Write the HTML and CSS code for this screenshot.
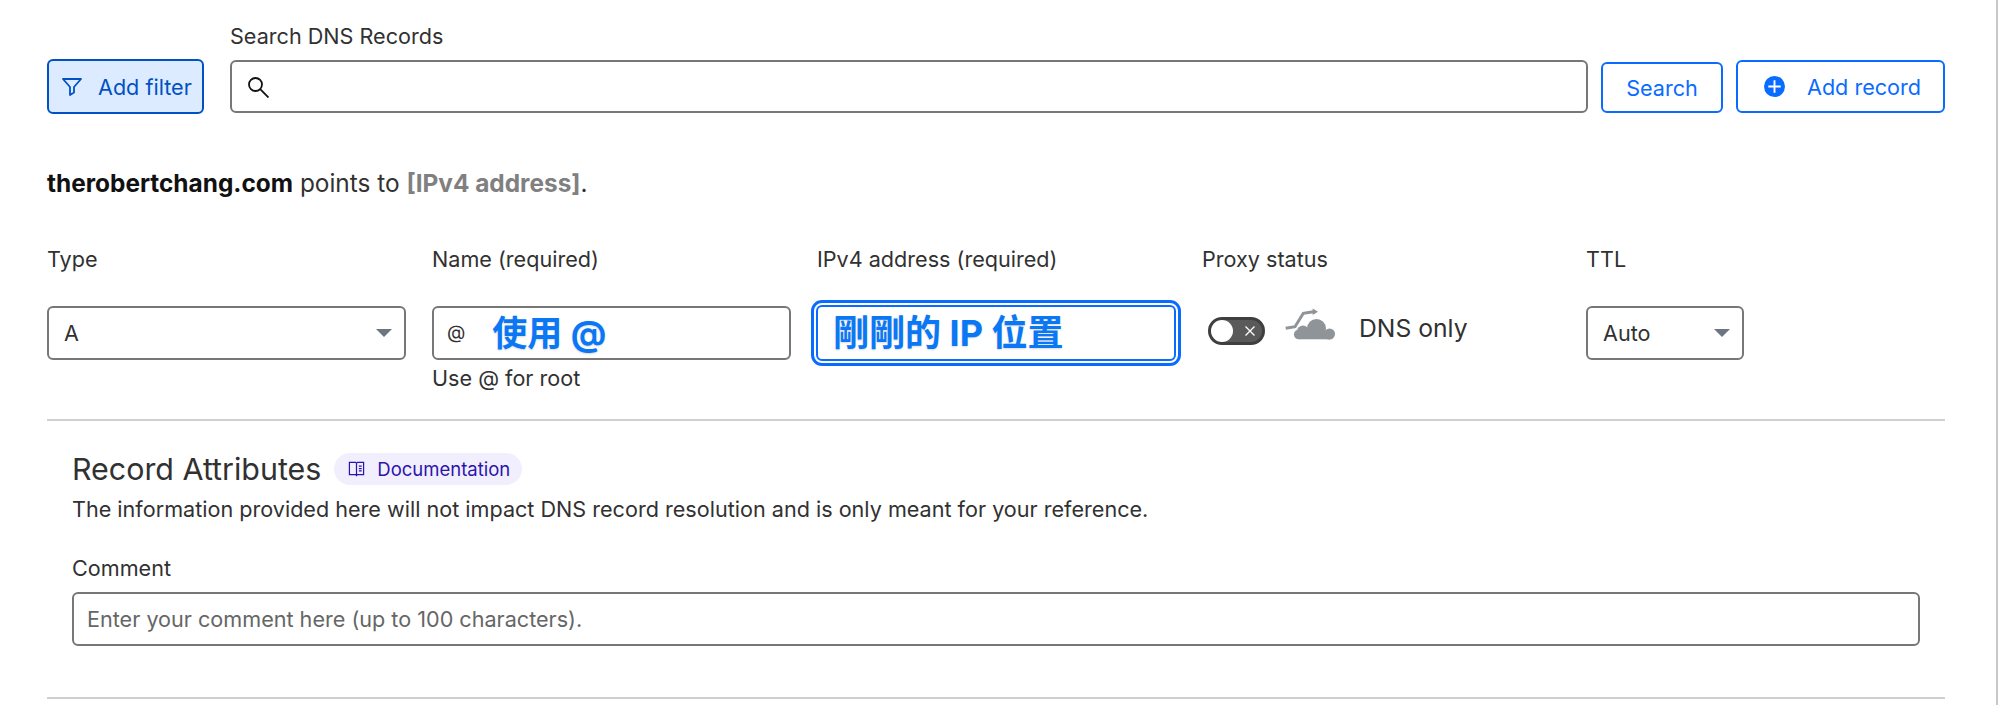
FILE: index.html
```html
<html>

<head>
    <title>DNS Records</title>
    <link rel="stylesheet" href="styles.css">
</head>

<body>
    <div class="page">
        <div class="searchRow">
            <button class="filterButton">
                <svg class="filterIcon" viewBox="0 0 20 18"><path d="M1 1H19L12 9V14.500L8 17V9Z" /></svg>
                Add filter
            </button>
            <div class="searchField">
                <div class="fieldLabel">Search DNS Records</div>
                <div class="textBox searchBox">
                    <svg class="searchIcon" viewBox="0 0 22 22"><circle cx="8.500" cy="8.500" r="6.500" /><path d="M13.200 13.200L21.500 21.500" /></svg>
                </div>
            </div>
            <button class="outlineButton searchButton">Search</button>
            <button class="outlineButton addButton">
                <svg class="plusIcon" viewBox="0 0 22 22"><circle cx="11" cy="11" r="11" /><path d="M11 4.500v13M4.500 11h13" /></svg>
                Add record
            </button>
        </div>

        <div class="pointsTo"><b>therobertchang.com</b> points to <span class="pointsAddress">[IPv4 address]</span>.</div>

        <div class="recordRow">
            <div class="column typeColumn">
                <div class="fieldLabel rowLabel">Type</div>
                <div class="textBox selectBox">A<span class="arrow"></span></div>
            </div>
            <div class="column nameColumn">
                <div class="fieldLabel rowLabel">Name (required)</div>
                <div class="textBox nameBox"><span class="atSign">@</span><span class="note noteName">使用 @</span></div>
                <div class="helpText">Use @ for root</div>
            </div>
            <div class="column ipColumn">
                <div class="fieldLabel rowLabel">IPv4 address (required)</div>
                <div class="textBox ipBox"><span class="note noteIp">剛剛的 IP 位置</span></div>
            </div>
            <div class="column proxyColumn">
                <div class="fieldLabel rowLabel">Proxy status</div>
                <div class="proxyLine">
                    <div class="toggle">
                        <span class="knob"></span>
                        <svg class="toggleX" viewBox="0 0 12 12"><path d="M1.500 1.500l9 9M10.500 1.500l-9 9" /></svg>
                    </div>
                    <svg class="cloudIcon" viewBox="0 0 50 32">
                        <circle class="cloudBody" cx="13.700" cy="26.500" r="4.800" />
                        <circle class="cloudBody" cx="18" cy="23.500" r="6" />
                        <circle class="cloudBody" cx="31.500" cy="20.500" r="9.500" />
                        <circle class="cloudBody" cx="44.500" cy="26" r="5.500" />
                        <rect class="cloudBody" x="14" y="24" width="31" height="7.300" />
                        <path class="cloudArrow" d="M0.700 20.300L10 18.700L18.300 5.300L28.300 3.700" />
                        <path class="cloudBody" d="M27.700 0.500L33 3.700L27.700 7z" />
                    </svg>
                    <span class="proxyText">DNS only</span>
                </div>
            </div>
            <div class="column ttlColumn">
                <div class="fieldLabel rowLabel">TTL</div>
                <div class="textBox selectBox">Auto<span class="arrow"></span></div>
            </div>
        </div>

        <hr class="rule" />

        <div class="attributes">
            <div class="attrHead">
                <span class="attrTitle">Record Attributes</span>
                <span class="docPill">
                    <svg class="bookIcon" viewBox="0 0 18 18"><path d="M1.500 2h6.500l1 1 1-1h6.500v13h-6.500l-1 1-1-1h-6.500zM9 3v12M11.500 6h3M11.500 8.500h3M11.500 11h3" /></svg>
                    Documentation
                </span>
            </div>
            <div class="attrInfo">The information provided here will not impact DNS record resolution and is only meant for your reference.</div>
            <div class="fieldLabel commentLabel">Comment</div>
            <div class="textBox commentBox">Enter your comment here (up to 100 characters).</div>
        </div>

        <hr class="rule ruleBottom" />
    </div>
</body>

</html>
```

FILE: styles.css
```css
html, body {
    margin: 0px;
    padding: 0px;
    background-color: white;
}

body {
    font-family: Inter, "Noto Sans CJK TC", sans-serif;
    font-size: 21.600px;
    color: #313131;
    height: 705px;
    overflow: hidden;
}

.page {
    box-sizing: border-box;
    width: 1998px;
    height: 705px;
    padding: 24px 51px 0px 47px;
    border-right: 2px solid #c8c8c8;
}

.searchRow {
    display: flex;
    align-items: flex-end;
    height: 90px;
}

button {
    font-family: inherit;
    font-size: 21.600px;
    box-sizing: border-box;
    background-color: white;
    border-radius: 6px;
    cursor: pointer;
    padding: 0px;
    flex-shrink: 0;
}

.filterButton {
    display: flex;
    align-items: center;
    width: 157px;
    height: 55px;
    margin-right: 26px;
    padding-left: 13px;
    color: #0051c3;
    background-color: #dcebff;
    border: 2px solid #0051c3;
}

.filterIcon {
    width: 20px;
    height: 18px;
    margin-right: 16px;
    fill: none;
    stroke: #0051c3;
    stroke-width: 1.800;
    stroke-linejoin: round;
}

.searchField {
    width: 1358px;
    margin-right: 13px;
    margin-bottom: 1px;
    flex-shrink: 0;
}

.fieldLabel {
    height: 37px;
    line-height: 27px;
}

.textBox {
    box-sizing: border-box;
    height: 54px;
    line-height: 50px;
    border: 2px solid #777777;
    border-radius: 6px;
    background-color: white;
}

.searchBox {
    height: 53px;
    display: flex;
    align-items: center;
    padding-left: 15px;
}

.searchIcon {
    width: 22px;
    height: 22px;
    fill: none;
    stroke: #111111;
    stroke-width: 1.800;
}

.outlineButton {
    display: flex;
    align-items: center;
    justify-content: center;
    color: #0a6cff;
    border: 2px solid #0a6cff;
    margin-bottom: 1px;
}

.searchButton {
    width: 122px;
    height: 51px;
    margin-right: 13px;
}

.addButton {
    width: 209px;
    height: 53px;
    justify-content: flex-start;
    padding-left: 26px;
}

.plusIcon {
    width: 21px;
    height: 21px;
    margin-right: 22px;
}

.plusIcon circle {
    fill: #0a6cff;
}

.plusIcon path {
    fill: none;
    stroke: white;
    stroke-width: 2;
}

.pointsTo {
    margin-top: 53px;
    font-size: 24.400px;
    line-height: 32px;
}

.pointsTo b {
    color: #111111;
}

.pointsAddress {
    font-weight: bold;
    color: #808080;
}

.recordRow {
    display: flex;
    margin-top: 47px;
    height: 173px;
}

.column {
    width: 385px;
    flex-shrink: 0;
}

.proxyColumn {
    width: 384px;
}

.rowLabel {
    height: 60px;
}

.selectBox {
    position: relative;
    padding-left: 15px;
}

.typeColumn .selectBox {
    width: 359px;
}

.ttlColumn .selectBox {
    width: 158px;
}

.arrow {
    position: absolute;
    right: 12px;
    top: 21px;
    border-left: 8px solid transparent;
    border-right: 8px solid transparent;
    border-top: 8px solid #6d7580;
}

.nameBox {
    width: 359px;
    display: flex;
    align-items: center;
    padding-left: 13px;
}

.atSign {
    font-size: 19px;
    margin-right: 27px;
}

.note {
    font-weight: bold;
    color: #0a78f5;
    line-height: 44px;
    text-shadow: 0px 1px 2px rgba(0, 0, 0, 0.15);
}

.noteName {
    font-size: 35px;
}

.noteIp {
    font-size: 36px;
}

.helpText {
    line-height: 36px;
}

.ipBox {
    width: 360px;
    height: 56px;
    margin-top: -1px;
    margin-left: -1px;
    display: flex;
    align-items: center;
    padding-left: 15px;
    border: 2px solid #0a6cff;
    outline: 3px solid #0a6cff;
    outline-offset: 2px;
}

.proxyLine {
    display: flex;
    align-items: center;
    height: 44px;
    padding-left: 6px;
}

.toggle {
    box-sizing: border-box;
    position: relative;
    width: 57px;
    height: 28px;
    margin-top: 6px;
    margin-right: 20px;
    border: 3px solid #3f3f3f;
    border-radius: 14px;
    background-color: #5a5a5a;
}

.knob {
    position: absolute;
    left: 0px;
    top: 0px;
    width: 22px;
    height: 22px;
    border-radius: 50%;
    background-color: white;
}

.toggleX {
    position: absolute;
    right: 6px;
    top: 5px;
    width: 12px;
    height: 12px;
    fill: none;
    stroke: white;
    stroke-width: 1.300;
}

.cloudIcon {
    width: 50px;
    height: 32px;
    margin-top: -8px;
    margin-right: 24px;
}

.cloudBody {
    fill: #8f9498;
}

.cloudArrow {
    fill: none;
    stroke: #8f9498;
    stroke-width: 3;
}

.proxyText {
    font-size: 24.700px;
}

.rule {
    border: none;
    height: 2px;
    margin: 0px;
    background-color: #cfcfcf;
}

.attributes {
    padding: 0px 25px 0px 25px;
}

.attrHead {
    display: flex;
    align-items: center;
    margin-top: 32px;
    height: 32px;
}

.attrTitle {
    font-size: 30.400px;
    margin-right: 13px;
}

.docPill {
    display: flex;
    align-items: center;
    height: 32px;
    padding: 0px 12px 0px 14px;
    border-radius: 16px;
    background-color: #f1effd;
    color: #2c13ad;
    font-size: 18.500px;
}

.bookIcon {
    width: 17px;
    height: 18px;
    margin-right: 12px;
    fill: none;
    stroke: #2c13ad;
    stroke-width: 1.300;
}

.attrInfo {
    margin-top: 8px;
    line-height: 32px;
}

.commentLabel {
    margin-top: 30px;
}

.commentBox {
    padding-left: 13px;
    color: #666666;
}

.ruleBottom {
    margin-top: 51px;
}
```
